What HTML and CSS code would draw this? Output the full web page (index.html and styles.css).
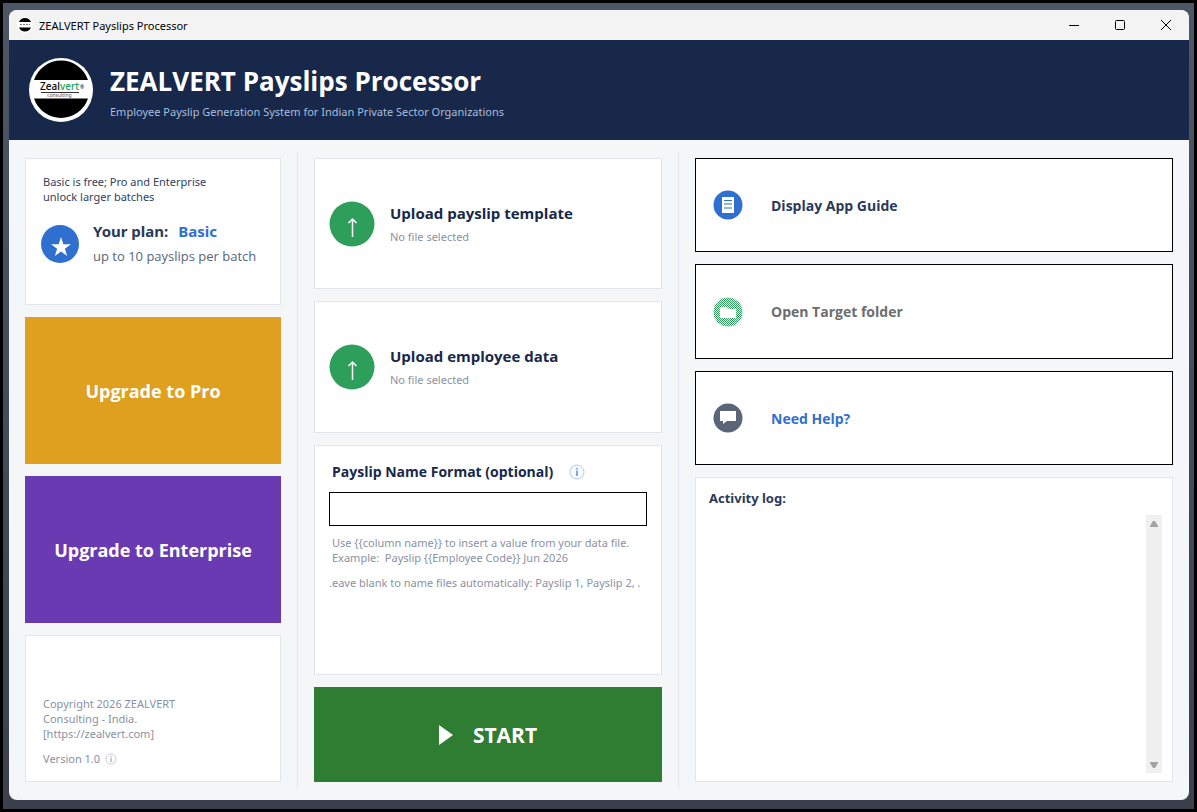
FILE: index.html
```html
<!DOCTYPE html>
<html lang="en">

<head>
  <meta charset="UTF-8" />
  <meta name="viewport" content="width=device-width, initial-scale=1.0" />
  <title>ZEALVERT Payslips Processor</title>
  <link rel="stylesheet" href="styles.css">
</head>

<body>
  <div class="window">
    <div class="titlebar">
      <svg class="titlebar-icon" viewBox="0 0 16 16">
        <circle cx="8" cy="8" r="8" fill="#fff" />
        <path d="M2 5a6.500 6.500 0 0 1 12 0zM2 10.500a6.500 6.500 0 0 0 12 0z" fill="#000" />
        <path d="M3 7.5h10" stroke="#777" stroke-width="1" stroke-dasharray="2 1" />
      </svg>
      <span class="titlebar-text">ZEALVERT Payslips Processor</span>
      <button class="win-btn" aria-label="Minimize">
        <svg viewBox="0 0 12 12"><path d="M1 6.5h10" /></svg>
      </button>
      <button class="win-btn" aria-label="Maximize">
        <svg viewBox="0 0 12 12"><rect x="1.5" y="1.5" width="9" height="9" rx="1" /></svg>
      </button>
      <button class="win-btn" aria-label="Close">
        <svg viewBox="0 0 12 12"><path d="M1 1l10 10M11 1L1 11" /></svg>
      </button>
    </div>

    <header class="header">
      <svg class="logo" viewBox="0 0 64 64">
        <circle cx="32" cy="32" r="32" fill="#fff" />
        <path d="M5 22a28.500 28.500 0 0 1 54 0zM5 40.500a28.500 28.500 0 0 0 54 0z" fill="#000" />
        <text x="11" y="32" class="logo-name">Zeal<tspan fill="#1fa050">vert</tspan></text>
        <text x="51" y="31" class="logo-mark">®</text>
        <path d="M12 34.500h38" stroke="#333" stroke-width="1" />
        <text x="18" y="39" class="logo-sub">consulting</text>
      </svg>
      <div>
        <h1 class="title">ZEALVERT Payslips Processor</h1>
        <p class="subtitle">Employee Payslip Generation System for Indian Private Sector Organizations</p>
      </div>
    </header>

    <main class="main">
      <section class="column plans">
        <div class="card plan-card">
          <p class="plan-note">Basic is free; Pro and Enterprise<br>unlock larger batches</p>
          <div class="plan-row">
            <svg class="plan-icon" viewBox="0 0 38 38">
              <circle cx="19" cy="19" r="19" fill="#2f6fd0" />
              <path d="M20 12l2.400 7.200h7.600l-6.100 4.500 2.300 7.300-6.200-4.500-6.200 4.500 2.300-7.300-6.100-4.500h7.600z" fill="#fff" />
            </svg>
            <div>
              <p class="plan-name">Your plan: <span class="plan-value">Basic</span></p>
              <p class="plan-limit">up to 10 payslips per batch</p>
            </div>
          </div>
        </div>
        <button class="upgrade pro">Upgrade to Pro</button>
        <button class="upgrade enterprise">Upgrade to Enterprise</button>
        <div class="card about">
          <p>Copyright 2026 ZEALVERT<br>Consulting - India.<br>[https://zealvert.com]</p>
          <p class="version">Version 1.0
            <svg class="info-small" viewBox="0 0 12 12">
              <circle cx="6" cy="6" r="5" fill="none" stroke="#c9cdd8" />
              <path d="M6 3v1M6 5v4" stroke="#8a91a3" />
            </svg>
          </p>
        </div>
      </section>

      <div class="divider"></div>

      <section class="column work">
        <button class="card upload">
          <svg class="upload-icon" viewBox="0 0 46 46">
            <circle cx="23" cy="23" r="22.500" fill="#2e9e5b" />
            <path d="M23.500 36V18.500M19.500 22l4-4 4 4" fill="none" stroke="#fff" stroke-width="1.500" />
          </svg>
          <span class="upload-text">
            <span class="upload-title">Upload payslip template</span>
            <span class="upload-file">No file selected</span>
          </span>
        </button>
        <button class="card upload">
          <svg class="upload-icon" viewBox="0 0 46 46">
            <circle cx="23" cy="23" r="22.500" fill="#2e9e5b" />
            <path d="M23.500 36V18.500M19.500 22l4-4 4 4" fill="none" stroke="#fff" stroke-width="1.500" />
          </svg>
          <span class="upload-text">
            <span class="upload-title">Upload employee data</span>
            <span class="upload-file">No file selected</span>
          </span>
        </button>
        <div class="card format">
          <div class="format-head">
            <label for="nameFormat" class="format-label">Payslip Name Format (optional)</label>
            <svg class="info" viewBox="0 0 16 16">
              <circle cx="8" cy="8" r="7" fill="#fbfcff" stroke="#b4c9ec" />
              <path d="M8 4v1.500M8 6.500v5.500" stroke="#2f6fd0" stroke-width="1.200" />
            </svg>
          </div>
          <input type="text" id="nameFormat" class="format-input">
          <p class="hint">Use {{column name}} to insert a value from your data file.<br>Example:&nbsp; Payslip {{Employee Code}} Jun 2026</p>
          <p class="hint-auto">.eave blank to name files automatically: Payslip 1, Payslip 2, .</p>
        </div>
        <button class="start">
          <svg class="start-icon" viewBox="0 0 14 20"><path d="M0 0l14 10L0 20z" fill="#fff" /></svg>
          START
        </button>
      </section>

      <div class="divider"></div>

      <section class="column tools">
        <button class="tool">
          <svg class="tool-icon" viewBox="0 0 30 30">
            <circle cx="15" cy="15" r="14.500" fill="#2f6fd0" />
            <path d="M9 7h12v16H9z" fill="#fff" />
            <path d="M11 10.500h8M11 14h8M11 18h8" stroke="#2f6fd0" stroke-width="1.200" />
          </svg>
          <span>Display App Guide</span>
        </button>
        <button class="tool" disabled>
          <svg class="tool-icon" viewBox="0 0 30 30">
            <defs>
              <pattern id="dither" width="2" height="2" patternUnits="userSpaceOnUse">
                <path d="M0 0h1v1H0zM1 1h1v1H1z" fill="#2e9e5b" shape-rendering="crispEdges" />
              </pattern>
            </defs>
            <circle cx="15" cy="15" r="14.500" fill="url(#dither)" />
            <path d="M7 10h7l2 2h7v9H7z" fill="#fff" />
          </svg>
          <span>Open Target folder</span>
        </button>
        <button class="tool help">
          <svg class="tool-icon" viewBox="0 0 30 30">
            <circle cx="15" cy="15" r="14.500" fill="#5a6578" />
            <path d="M7 8h16v10H14l-4 3v-3H7z" fill="#fff" />
          </svg>
          <span>Need Help?</span>
        </button>
        <div class="card log">
          <label for="activityLog" class="log-label">Activity log:</label>
          <div class="log-body">
            <textarea id="activityLog" class="log-text" readonly></textarea>
            <div class="scrollbar">
              <svg viewBox="0 0 8 6"><path d="M0 6V5l3-5h2l3 5v1z" /></svg>
              <svg viewBox="0 0 8 6"><path d="M0 0v1l3 5h2l3-5V0z" /></svg>
            </div>
          </div>
        </div>
      </section>
    </main>
  </div>
</body>

</html>
```
FILE: styles.css
```css
* {
  box-sizing: border-box;
}

body {
  margin: 0;
  min-height: 100vh;
  display: flex;
  padding: 7px 5px 9px 6px;
  border: 3px solid #000;
  background: linear-gradient(#4c5766, #3a414d);
  font-family: "Noto Sans", "Open Sans", sans-serif;
  font-size: 11px;
  line-height: 15px;
  color: #1b2a49;
}

h1,
p {
  margin: 0;
}

button {
  font-family: inherit;
  margin: 0;
  cursor: pointer;
}

svg {
  display: block;
  flex-shrink: 0;
}

.window {
  flex: 1;
  display: flex;
  flex-direction: column;
  border-radius: 8px;
  overflow: hidden;
  background: #f4f6f8;
}

/* title bar */
.titlebar {
  display: flex;
  align-items: center;
  height: 30px;
  padding-left: 8px;
  background: #f3f3f3;
}

.titlebar-icon {
  width: 16px;
  height: 16px;
}

.titlebar-text {
  flex: 1;
  margin-left: 6px;
  color: #000;
}

.win-btn {
  display: flex;
  align-items: center;
  justify-content: center;
  width: 46px;
  height: 30px;
  padding: 0;
  border: none;
  background: none;
}

.win-btn svg {
  width: 12px;
  height: 12px;
  fill: none;
  stroke: #000;
}

/* header */
.header {
  display: flex;
  align-items: center;
  gap: 17px;
  height: 100px;
  padding: 2px 20px 0;
  background: #17284b;
}

.logo {
  width: 64px;
  height: 64px;
  margin-bottom: 2px;
}

.logo-name {
  font-size: 10px;
  font-weight: 500;
}

.logo-mark {
  font-size: 5px;
}

.logo-sub {
  font-size: 5px;
  fill: #555;
}

.title {
  font-family: "Open Sans", sans-serif;
  font-size: 26px;
  line-height: 38px;
  font-weight: bold;
  color: #fff;
}

.subtitle {
  margin-top: 4px;
  font-size: 11px;
  line-height: 16px;
  color: #a9bfdd;
}

/* columns */
.main {
  flex: 1;
  display: grid;
  grid-template-columns: 256fr 1px 348fr 1px 478fr;
  gap: 16px;
  padding: 12px 16px;
}

.column {
  display: grid;
  gap: 12px;
  padding: 6px 0;
  min-width: 0;
}

.divider {
  background: #e1e5ec;
}

.card {
  border: 1px solid #e1e5ec;
  background: #fff;
}

.plans {
  grid-template-rows: repeat(4, 1fr);
}

.work {
  grid-template-rows: 131fr 132fr 230fr 95fr;
}

.tools {
  grid-template-rows: 94fr 95fr 94fr 305fr;
}

/* plans */
.plan-card {
  padding: 15px;
}

.plan-note {
  padding-left: 2px;
  color: #33415c;
}

.plan-row {
  display: flex;
  align-items: center;
  gap: 14px;
  margin-top: 15px;
}

.plan-icon {
  width: 38px;
  height: 38px;
}

.plan-name {
  font-size: 15px;
  line-height: 24px;
  font-weight: bold;
  color: #2a3958;
}

.plan-value {
  margin-left: 6px;
  color: #2f6fd0;
}

.plan-limit {
  font-family: "Open Sans", sans-serif;
  font-size: 13px;
  line-height: 26px;
  color: #5a6578;
}

.upgrade {
  border: none;
  font-family: "Open Sans", sans-serif;
  font-size: 18px;
  font-weight: bold;
  color: #fff;
}

.pro {
  background: #dfa020;
}

.enterprise {
  background: #6a3ab2;
}

.about {
  display: flex;
  flex-direction: column;
  justify-content: flex-end;
  gap: 10px;
  padding: 15px 17px;
  color: #8a91a3;
}

.version {
  display: flex;
  align-items: center;
  gap: 5px;
}

.info-small {
  width: 12px;
  height: 12px;
}

/* uploads */
.upload {
  display: flex;
  align-items: center;
  gap: 15px;
  padding: 0 14px;
  text-align: left;
}

.upload-icon {
  width: 46px;
  height: 46px;
}

.upload-text {
  display: flex;
  flex-direction: column;
  gap: 2px;
}

.upload-title {
  font-family: "Open Sans", sans-serif;
  font-size: 15px;
  line-height: 24px;
  font-weight: bold;
  color: #17284b;
}

.upload-file {
  font-size: 11px;
  line-height: 20px;
  color: #8a91a3;
}

/* name format */
.format {
  padding: 14px;
  color: #8a91a3;
}

.format-head {
  display: flex;
  align-items: center;
  gap: 16px;
  padding-left: 3px;
}

.format-label {
  font-family: "Open Sans", sans-serif;
  font-size: 14px;
  line-height: 24px;
  font-weight: bold;
  color: #17284b;
}

.info {
  width: 16px;
  height: 16px;
}

.format-input {
  display: block;
  width: 100%;
  height: 34px;
  margin-top: 8px;
  padding: 0 8px;
  border: 1px solid #000;
  font-family: inherit;
  font-size: 14px;
}

.hint {
  margin-top: 9px;
  padding-left: 3px;
}

.hint-auto {
  margin-top: 10px;
}

.start {
  display: flex;
  align-items: center;
  justify-content: center;
  gap: 20px;
  border: none;
  background: #2f7d32;
  font-family: "Open Sans", sans-serif;
  font-size: 21px;
  font-weight: bold;
  color: #fff;
}

.start-icon {
  width: 14px;
  height: 20px;
}

/* right column */
.tool {
  display: flex;
  align-items: center;
  gap: 28px;
  padding: 0 17px;
  border: 1px solid #000;
  background: #fff;
  font-family: "Open Sans", sans-serif;
  font-size: 14px;
  font-weight: bold;
  color: #2a3958;
}

.tool:disabled {
  color: #6d6d6d;
  cursor: default;
}

.help {
  color: #2f6fd0;
}

.tool-icon {
  width: 30px;
  height: 30px;
}

.log {
  display: flex;
  flex-direction: column;
  padding: 10px 10px 8px 13px;
}

.log-label {
  font-size: 13px;
  line-height: 20px;
  font-weight: bold;
  color: #2a3958;
}

.log-body {
  flex: 1;
  display: flex;
  margin-top: 7px;
}

.log-text {
  flex: 1;
  padding: 0;
  border: none;
  outline: none;
  resize: none;
  background: none;
}

.scrollbar {
  display: flex;
  flex-direction: column;
  justify-content: space-between;
  align-items: center;
  width: 16px;
  padding: 6px 0 5px;
  background: #f0f0f0;
}

.scrollbar svg {
  width: 8px;
  height: 6px;
  fill: #a3a3a3;
}
```
